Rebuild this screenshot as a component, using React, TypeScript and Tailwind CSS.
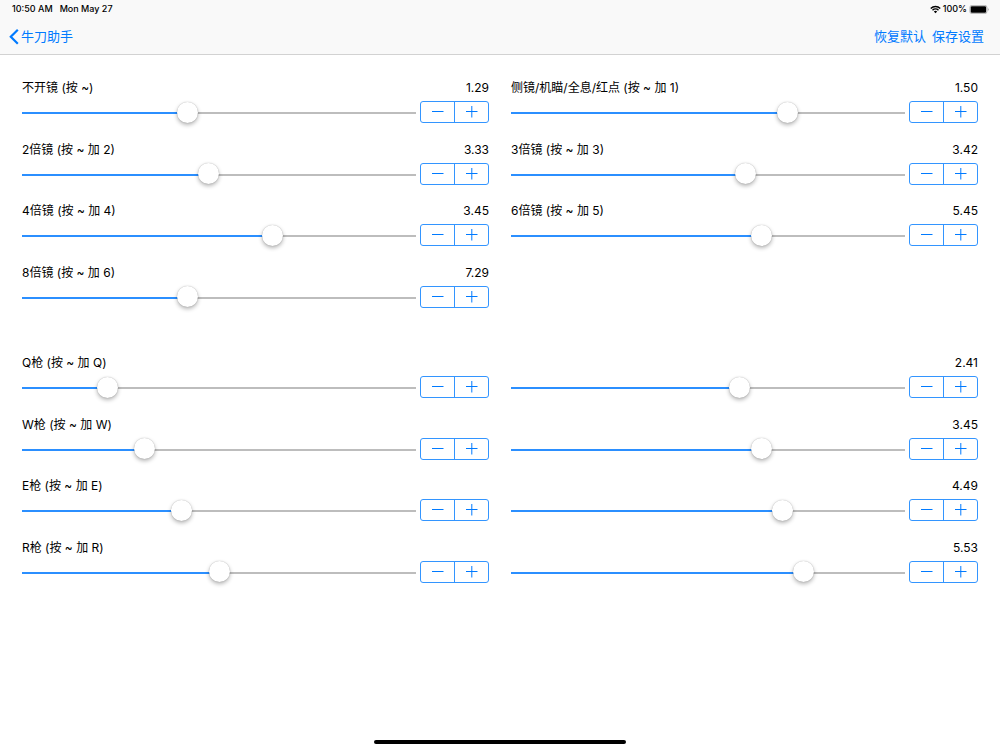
import React, { useState } from 'react';

interface Setting {
  id: string;
  label?: string;
  name: string;
  min: number;
  max: number;
  value: number;
  showValue: boolean;
}

// Every recoil value covers 0.7 above its base number
const RANGE = 0.7;

const scope = (id: string, label: string, base: number, value: number): Setting => ({
  id, label, name: label, min: base, max: base + RANGE, value, showValue: true,
});

const gun = (key: string, base: number, ratio: number, value: number): Setting[] => [
  { id: `${key}-ratio`, label: `${key}枪 (按 ~ 加 ${key})`, name: `${key}枪`, min: 0, max: 1, value: ratio, showValue: false },
  { id: `${key}-value`, name: `${key}枪 数值`, min: base, max: base + RANGE, value, showValue: true },
];

const SCOPES: Setting[] = [
  scope('none', '不开镜 (按 ~)', 1, 1.29),
  scope('x1', '侧镜/机瞄/全息/红点 (按 ~ 加 1)', 1, 1.5),
  scope('x2', '2倍镜 (按 ~ 加 2)', 3, 3.33),
  scope('x3', '3倍镜 (按 ~ 加 3)', 3, 3.42),
  scope('x4', '4倍镜 (按 ~ 加 4)', 3, 3.45),
  scope('x6', '6倍镜 (按 ~ 加 5)', 5, 5.45),
  scope('x8', '8倍镜 (按 ~ 加 6)', 7, 7.29),
];

const GUNS: Setting[] = [
  ...gun('Q', 2, 0.2, 2.41),
  ...gun('W', 3, 0.3, 3.45),
  ...gun('E', 4, 0.4, 4.49),
  ...gun('R', 5, 0.5, 5.53),
];

const initialValues = () =>
  Object.fromEntries([...SCOPES, ...GUNS].map((s) => [s.id, s.value])) as Record<string, number>;

function StatusBar() {
  return (
    <div className="flex h-[18px] items-center justify-between pr-[11px] pl-3 text-[9px] font-medium text-black">
      <div className="flex gap-[7px]">
        <span>10:50 AM</span>
        <span>Mon May 27</span>
      </div>
      <div className="flex items-center gap-[2px]">
        <svg className="h-[9px] w-[11px]" viewBox="0 0 22 18" fill="none" stroke="currentColor" strokeWidth="2.8">
          <path d="M1.5 6.8a13.5 13.5 0 0 1 19 0" />
          <path d="M5 10.4a8.5 8.5 0 0 1 12 0" />
          <path d="M7.7 13.1a4.7 4.7 0 0 1 6.6 0L11 16.6z" fill="currentColor" stroke="none" />
        </svg>
        <span>100%</span>
        <svg className="h-[9px] w-[20px]" viewBox="0 0 20 9">
          <rect x="0.9" y="0.4" width="17" height="8.2" rx="2" fill="none" stroke="#a3a3a3" strokeWidth="0.8" />
          <rect x="1.7" y="1.2" width="15.4" height="6.6" rx="1.2" fill="#000" />
          <path d="M18.8 3v3c.6-.3 1-.9 1-1.5s-.4-1.200-1-1.500z" fill="#a3a3a3" />
        </svg>
      </div>
    </div>
  );
}

interface SliderRowProps {
  setting: Setting;
  value: number;
  onChange: (value: number) => void;
}

function SliderRow({ setting, value, onChange }: SliderRowProps) {
  const { id, label, name, min, max, showValue } = setting;
  const ratio = (value - min) / (max - min);
  const step = (delta: number) => onChange(Math.min(max, Math.max(min, value + delta)));

  return (
    <div>
      <div className="flex h-[22px] items-center justify-between">
        {label ? <label htmlFor={id}>{label}</label> : <span />}
        {showValue && <output htmlFor={id}>{value.toFixed(2)}</output>}
      </div>
      <div className="mt-[2px] flex items-center gap-1">
        <input
          id={id}
          type="range"
          aria-label={label ? undefined : name}
          min={min}
          max={max}
          step={0.01}
          value={value}
          onChange={(e) => onChange(Number(e.target.value))}
          style={{
            backgroundImage: `linear-gradient(to right, #2b8fff ${ratio * 100}%, #bdbdbd ${ratio * 100}%)`,
          }}
          className="h-[22px] min-w-0 flex-1 cursor-pointer appearance-none bg-transparent bg-[length:100%_2px] bg-[position:0_11px] bg-no-repeat outline-none [&::-webkit-slider-thumb]:size-[21px] [&::-webkit-slider-thumb]:appearance-none [&::-webkit-slider-thumb]:rounded-full [&::-webkit-slider-thumb]:bg-white [&::-webkit-slider-thumb]:shadow-[0_0_1px_rgba(0,0,0,0.3),0_2px_4px_rgba(0,0,0,0.3)]"
        />
        <div className="flex h-[22px] w-[69px] divide-x divide-[#3395ff] rounded-[3px] border border-[#3395ff] text-[#007aff]">
          <button
            type="button"
            aria-label={`${name} 减少`}
            onClick={() => step(-0.01)}
            className="flex flex-1 items-center justify-center active:bg-blue-100"
          >
            <svg className="size-3" viewBox="0 0 12 12" stroke="currentColor">
              <path d="M0 5.500h11.500" />
            </svg>
          </button>
          <button
            type="button"
            aria-label={`${name} 增加`}
            onClick={() => step(0.01)}
            className="flex flex-1 items-center justify-center active:bg-blue-100"
          >
            <svg className="size-3" viewBox="0 0 12 12" stroke="currentColor">
              <path d="M0 5.500h11.500M5.800 0v11.500" />
            </svg>
          </button>
        </div>
      </div>
    </div>
  );
}

export default function App() {
  const [values, setValues] = useState(initialValues);

  const renderGroup = (settings: Setting[]) => (
    <section className="grid h-[246px] grid-cols-2 grid-rows-4 gap-x-[22px]">
      {settings.map((s) => (
        <SliderRow
          key={s.id}
          setting={s}
          value={values[s.id]}
          onChange={(v) => setValues((prev) => ({ ...prev, [s.id]: v }))}
        />
      ))}
    </section>
  );

  return (
    <div className="flex min-h-screen flex-col bg-white font-[Inter,'Noto_Sans_CJK_SC',sans-serif] text-[12px] text-black">
      <header className="border-b border-[#d2d2d2] bg-[#f9f9f9]">
        <StatusBar />
        <nav className="flex h-9 items-center justify-between pt-[2px] pr-4 pl-[9px] text-[13px] text-[#007aff]">
          <a href="#" className="flex items-center gap-[2px]">
            <svg className="h-4 w-[10px]" viewBox="0 0 10 16" fill="none" stroke="currentColor" strokeWidth="2.2">
              <path d="M8.8 .8L1.8 7.800l7 7" />
            </svg>
            牛刀助手
          </a>
          <div className="flex gap-[6px]">
            <button type="button" onClick={() => setValues(initialValues())}>恢复默认</button>
            <button type="button">保存设置</button>
          </div>
        </nav>
      </header>

      <main className="flex flex-col gap-[29px] px-[22px] pt-[22px]">
        {renderGroup(SCOPES)}
        {renderGroup(GUNS)}
      </main>

      <footer className="mt-auto flex justify-center pb-[6px]">
        <div className="h-1 w-[252px] rounded-full bg-black" />
      </footer>
    </div>
  );
}
